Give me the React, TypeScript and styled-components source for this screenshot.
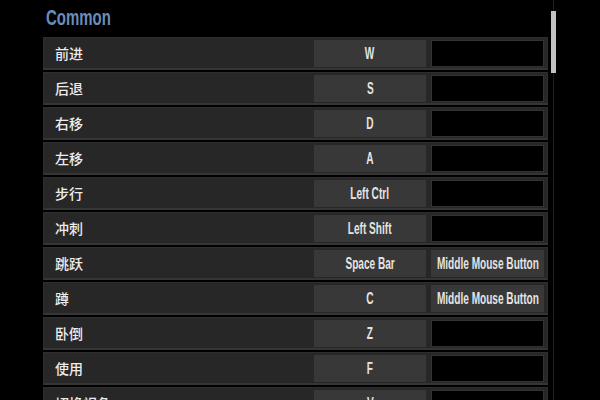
import React from "react";
import styled, { createGlobalStyle } from "styled-components";

const Global = createGlobalStyle`
  html, body { margin: 0; padding: 0; background: #000; overflow: hidden; }
  body { width: 600px; height: 400px; font-family: "Liberation Sans", Arial, sans-serif; }
`;

const Page = styled.div`
  display: flex;
  align-items: flex-start;
  height: 400px;
  padding-left: 43px;
  gap: 3px;
  overflow: hidden;
`;

const Content = styled.div`
  width: 505px;
  display: flex;
  flex-direction: column;
`;

const Title = styled.div`
  height: 22px;
  padding-top: 7px;
  margin-bottom: 8px;
  padding-left: 3px;
  line-height: 22px;
`;

const TitleText = styled.span`
  display: inline-block;
  font-family: "Liberation Sans", Arial, sans-serif;
  font-weight: 700;
  font-size: 22px;
  color: #6b8dba;
  transform: scaleX(0.68);
  transform-origin: left center;
`;

const List = styled.div`
  display: flex;
  flex-direction: column;
  gap: 2px;
`;

const Row = styled.div`
  height: 33px;
  box-sizing: border-box;
  display: flex;
  align-items: center;
  background: #272727;
  border: 1px solid #2e2e2e;
  border-bottom: 2px solid #353535;
  padding: 2px 3px 1px 11px;
  gap: 5px;
`;

const Label = styled.div`
  flex: 1;
  font-family: "Noto Sans CJK SC", "Noto Sans", sans-serif;
  font-size: 14px;
  font-weight: 500;
  color: #ececec;
  line-height: 27px;
`;

const Cell = styled.div<{ $empty?: boolean }>`
  box-sizing: border-box;
  height: 27px;
  display: flex;
  align-items: center;
  justify-content: center;
  background: ${(p) => (p.$empty ? "#000" : "#383838")};
  border: 1px solid ${(p) => (p.$empty ? "#333" : "#383838")};
  overflow: hidden;
  white-space: nowrap;
`;

const KeyCell = styled(Cell)`
  width: 112px;
`;

const AltCell = styled(Cell)`
  width: 113px;
`;

const KeyText = styled.span`
  display: inline-block;
  font-family: "Liberation Sans", Arial, sans-serif;
  font-weight: 700;
  font-size: 16px;
  color: #e4e4e4;
  transform: scaleX(0.63);
`;

const Scroll = styled.div`
  position: relative;
  width: 5px;
  height: 400px;
  &::before {
    content: "";
    position: absolute;
    left: 2px;
    top: 0;
    bottom: 0;
    width: 1px;
    background: #1e1e1e;
  }
`;

const Thumb = styled.div`
  position: relative;
  margin-top: 11px;
  width: 5px;
  height: 62px;
  background: #c2c2c2;
`;

const rows: [string, string, string][] = [
  ["前进", "W", ""],
  ["后退", "S", ""],
  ["右移", "D", ""],
  ["左移", "A", ""],
  ["步行", "Left Ctrl", ""],
  ["冲刺", "Left Shift", ""],
  ["跳跃", "Space Bar", "Middle Mouse Button"],
  ["蹲", "C", "Middle Mouse Button"],
  ["卧倒", "Z", ""],
  ["使用", "F", ""],
  ["切换视角", "V", ""],
];

export default function App() {
  return (
    <>
      <Global />
      <Page>
        <Content>
          <Title>
            <TitleText>Common</TitleText>
          </Title>
          <List>
            {rows.map(([label, key, alt]) => (
              <Row key={label}>
                <Label>{label}</Label>
                <KeyCell>
                  <KeyText>{key}</KeyText>
                </KeyCell>
                <AltCell $empty={!alt}>
                  {alt && <KeyText>{alt}</KeyText>}
                </AltCell>
              </Row>
            ))}
          </List>
        </Content>
        <Scroll>
          <Thumb />
        </Scroll>
      </Page>
    </>
  );
}
